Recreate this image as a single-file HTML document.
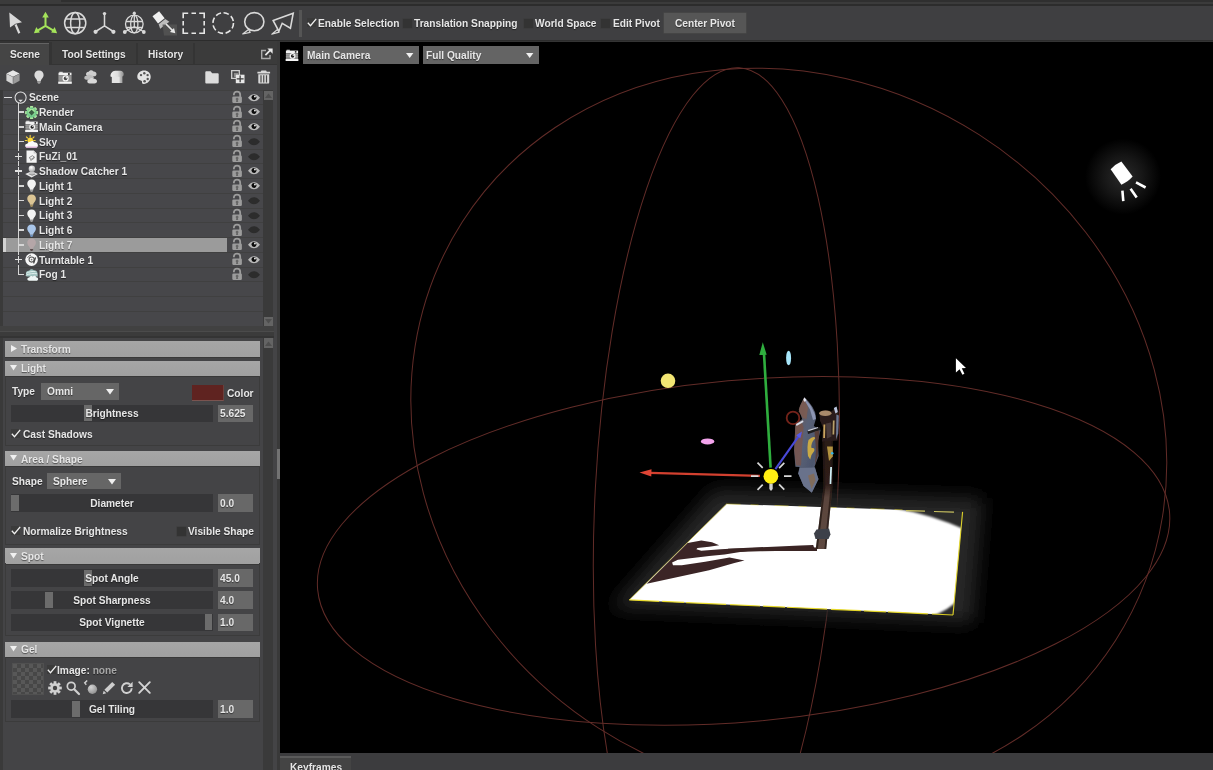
<!DOCTYPE html>
<html lang="en">
<head>
<meta charset="utf-8">
<title>Scene - Light 7</title>
<style>
*{box-sizing:border-box;margin:0;padding:0}
html,body{width:1213px;height:770px;overflow:hidden;background:#3d3d3d}
body{font-family:"Liberation Sans",sans-serif;font-size:11.5px;font-weight:700;color:#e6e6e6;line-height:14px;-webkit-font-smoothing:antialiased;text-shadow:0 1px 1px rgba(0,0,0,.5)}
#app{will-change:transform;filter:blur(0.400px);position:relative;width:1213px;height:770px;overflow:hidden;background:#3d3d3d}
.a{position:absolute}
.t{position:absolute;white-space:nowrap;transform:scaleX(.885);transform-origin:0 50%}
.tc{transform-origin:50% 50%}
svg{position:absolute;overflow:visible}
#topstrip{left:0;top:0;width:1213px;height:6px;background:#3b3b3b}
#toolbar{left:0;top:6px;width:1213px;height:34px;background:#3f3f41}
#tbline{left:0;top:39.600px;width:1213px;height:2.900px;background:#343434;border-top:1.200px solid #2c2c2c}
#left{left:0;top:42px;width:277.200px;height:728px;background:#444446}
#split{left:277.200px;top:40.800px;width:2.800px;height:729.200px;background:#393939}
#viewport{left:280px;top:42.400px;width:933px;height:710.600px;background:#000;overflow:hidden}
#bottom{left:280px;top:753px;width:933px;height:17px;background:#3c3c3e}
.cb{position:absolute;width:9px;height:9.200px;background:#333;box-shadow:0 0 0 0.500px #3a3a3a}
.dd{position:absolute;background:#666;height:17px}
.hdr{position:absolute;left:5.300px;width:254.300px;height:15.400px;background:linear-gradient(#a6a6a6,#a0a0a0);box-shadow:0 1px 0 #383838}
.grp{position:absolute;left:5px;width:255px;border:1px solid #3b3b3b;border-top:none}
.trk{position:absolute;left:11px;width:202px;height:17.700px;background:#363638}
.hnd{position:absolute;width:7.800px;height:16px;background:#6c6c6c;top:0.850px}
.val{position:absolute;left:217.800px;width:35.400px;height:17.700px;background:#686868}
</style>
</head>
<body>
<div id="app">
<div class="a" id="topstrip"><div class="a" style="left:61px;top:0;width:1152px;height:2px;background:#2f2f2f"></div><div class="a" style="left:0;top:4px;width:1213px;height:2px;background:#2c2c2c"></div></div>
<div class="a" id="toolbar">
<div class="a" style="left:299px;top:4px;width:3px;height:27px;background:#555"></div>
<div class="t" style="left:318px;top:10px">Enable Selection</div>
<div class="cb" style="left:403.300px;top:12.500px"></div>
<div class="t" style="left:414px;top:10px">Translation Snapping</div>
<div class="cb" style="left:523.700px;top:12.500px"></div>
<div class="t" style="left:535px;top:10px">World Space</div>
<div class="cb" style="left:601.300px;top:12.500px"></div>
<div class="t" style="left:612.500px;top:10px">Edit Pivot</div>
<div class="a" style="left:663.900px;top:7px;width:82.400px;height:20px;background:#565656;box-shadow:0 0 0 0.600px #4a4a4a"></div>
<div class="t" style="left:675px;top:10px">Center Pivot</div>
</div>
<div class="a" id="tbline"></div>
<div class="a" id="left">
<div class="a" id="tabs" style="left:0;top:-1.200px;width:277.200px;height:24.300px;background:#3b3b3b">
<div class="a" style="left:0;top:0;width:48.900px;height:1.800px;background:#333"></div>
<div class="a" style="left:0;top:1.800px;width:48.900px;height:22.500px;background:#454545;border-top:1.700px solid #636363"></div>
<div class="a" style="left:48.900px;top:1.500px;width:3px;height:22.800px;background:#343434"></div>
<div class="a" style="left:135.500px;top:2px;width:2.500px;height:21px;background:#343434"></div>
<div class="a" style="left:192.500px;top:2px;width:2.500px;height:21px;background:#343434"></div>
<div class="a" style="left:51.900px;top:23.300px;width:225.300px;height:1px;background:#343434"></div>
<div class="t" style="left:10px;top:5.700px">Scene</div>
<div class="t" style="left:62px;top:5.700px">Tool Settings</div>
<div class="t" style="left:148px;top:5.700px">History</div>
</div>
</div>
<div class="a" id="split"></div>
<div class="a" id="viewport">
<svg style="left:0;top:0" width="933" height="710.600" viewBox="280 42.400 933 710.600">
<defs><filter id="bl10" x="-30%" y="-60%" width="160%" height="220%"><feGaussianBlur stdDeviation="9"/></filter><filter id="bl1" x="-10%" y="-10%" width="120%" height="120%"><feGaussianBlur stdDeviation="1.100"/></filter><filter id="bl05"><feGaussianBlur stdDeviation="0.500"/></filter><filter id="bl03" x="-20%" y="-5%" width="140%" height="110%"><feGaussianBlur stdDeviation="0.350"/></filter><radialGradient id="spotg"><stop offset="0" stop-color="#2a2a2a"/><stop offset="0.500" stop-color="#171717"/><stop offset="1" stop-color="#000"/></radialGradient><linearGradient id="hndv" x1="0" x2="0" y1="0" y2="1"><stop offset="0" stop-color="#2a1b17"/><stop offset="0.400" stop-color="#2e1e1a"/><stop offset="0.520" stop-color="#5a443c"/><stop offset="1" stop-color="#5e4a42"/></linearGradient><linearGradient id="hnd" x1="0" x2="1" y1="0" y2="0"><stop offset="0" stop-color="#241816"/><stop offset="0.450" stop-color="#5e443c"/><stop offset="1" stop-color="#21150f"/></linearGradient><linearGradient id="bld" x1="0" x2="1" y1="0" y2="1"><stop offset="0" stop-color="#665049"/><stop offset="0.400" stop-color="#596176"/><stop offset="0.700" stop-color="#4c556c"/><stop offset="1" stop-color="#7a8298"/></linearGradient></defs>
<g><ellipse cx="788.800" cy="431.800" rx="387.900" ry="352.500" transform="rotate(-147.340 788.800 431.800)" fill="none" stroke="#622c28" stroke-width="1"/><ellipse cx="716.400" cy="494.700" rx="121.200" ry="427.200" transform="rotate(-176.970 716.400 494.700)" fill="none" stroke="#622c28" stroke-width="1"/><ellipse cx="743.600" cy="551.300" rx="170.800" ry="427.700" transform="rotate(84.810 743.600 551.300)" fill="none" stroke="#622c28" stroke-width="1"/></g>
<circle cx="1123" cy="177" r="38" fill="url(#spotg)"/>
<g transform="translate(1121.600 173.500) rotate(54.300)" fill="#fff"><path d="M-9.600 -6.600Q-11 0 -9.600 6.600L9.300 6.900Q11 0 9.300 -6.900Z"/></g>
<g stroke="#fff" stroke-width="2.600" stroke-linecap="butt"><path d="M1122.400 191.100L1123.300 201.500M1130.600 189.200L1136.700 197.800M1136 182.800L1145.600 187.900"/></g>
<polygon points="714.6,490.3 982.6,498.3 973.0,623.4 611.2,608.3" fill="#282828" filter="url(#bl10)"/>
<polygon points="726.6,504.3 962.6,512.3 953.0,615.4 629.2,600.3" fill="#2b2b2b"/>
<clipPath id="pl"><polygon points="726.6,504.3 962.6,512.3 953.0,615.4 629.2,600.3"/></clipPath>
<g clip-path="url(#pl)"><path filter="url(#bl1)" d="M600 640L600 480L740 480L894 508.300Q932 515 966 530.300L960 598Q949 611.500 929 617.500L700 640Z" fill="#fff"/></g>
<path d="M629.200 600.300L953 615.400" fill="none" stroke="#f0e020" stroke-width="1.200" stroke-dasharray="30 3 22 2 40 4" opacity="0.900"/>
<path d="M953 615.400L962.600 512.300" fill="none" stroke="#e6d92a" stroke-width="1.100" opacity="0.950"/>
<path d="M629.200 600.300L726.600 504.300" fill="none" stroke="#c9bd3a" stroke-width="0.900" opacity="0.800"/>
<path d="M726.600 504.300L905 510.200" fill="none" stroke="#f0e020" stroke-width="0.900" stroke-dasharray="14 10 8 16" opacity="0.450"/>
<path d="M906 511L962.600 512.800" fill="none" stroke="#c8c060" stroke-width="1.200" stroke-dasharray="19 9 20 12"/>
<polygon points="646.7,584.2 687.6,543.3 701.3,541.0 712.0,542.7 719.2,545.6 709.1,547.2 697.4,548.5 696.4,549.7 701.3,551.1 720.7,549.7 748.0,548.2 800.0,545.8 813.2,545.4 814.2,548.5 800.0,549.1 755.8,550.5 740.2,552.4 724.6,555.0 709.1,556.3 677.9,560.2 672.1,562.8 673.0,565.7 681.8,565.7 705.2,562.2 729.5,557.9 744.5,560.8 734.4,563.3 709.1,570.6 677.9,577.4" fill="#3b2526"/>
<path d="M728 550.900L760 549.900L790 549.300L817 549.600" stroke="#3a2423" stroke-width="3.600" fill="none"/>
<path d="M770.600 468L764 354" stroke="#2fae3e" stroke-width="2.600" fill="none"/><path d="M762.800 342.600L759.300 355.500L766.700 355.200Z" fill="#2fae3e"/>
<path d="M760 476.300L650 473.300" stroke="#d2402f" stroke-width="2.400" fill="none"/><path d="M639.500 473L651.500 469.600L651.300 476.800Z" fill="#e04535"/>
<circle cx="793" cy="418.300" r="6.300" fill="none" stroke="#74241a" stroke-width="1.800" filter="url(#bl05)"/>
<g filter="url(#bl03)">
<path d="M822.500 441L832.800 441L832.400 488L826.200 549.500L815.800 549.500L823.500 488Z" fill="url(#hndv)"/>
<path d="M822.500 441L824.500 441L825.300 488L817.800 549.500L815.800 549.500L823.500 488Z" fill="#1c1210" opacity="0.700"/>
<path d="M831 441L832.800 441L832.400 488L826.200 549.500L824.400 549.500L830.500 488Z" fill="#1c1210" opacity="0.650"/>
<path d="M819.500 413Q825 408.500 831.500 412L836 407.500L838.500 412L839.500 424L837.500 441L822 442L823 428L820 421Z" fill="#2c1f1b"/>
<ellipse cx="825.300" cy="413.700" rx="6.200" ry="2.800" fill="#a98a6c"/>
<path d="M823.500 425L825.300 425L825 438.500L823.200 438.500Z" fill="#c9a45e"/><path d="M832.900 421L834.600 421L834.200 435L832.500 435Z" fill="#b9a06a"/>
<path d="M833.800 408.500L836.600 407L837.800 412.500L835.500 414Z" fill="#b9c4dc"/><path d="M836.400 415L838.800 416L838.200 434L836 440Z" fill="#6d7894"/>
<path d="M826 424L831 423L831.500 437L827 439Z" fill="#4a3a3a"/>
<path d="M827 447L832.800 447L832.800 457L829 461.500Z" fill="#b1923f"/><circle cx="832.200" cy="453.600" r="1.300" fill="#35b6ea"/>
<path d="M830.200 467.500L832 467.500L831.300 484.500L829.600 484.500Z" fill="#cfeef6"/>
<path d="M816.500 530L829 529L830.500 535L828.500 539.500L815.500 539.500L814 534Z" fill="#3c4048"/>
<polygon points="804.3,397.7 808.5,402.0 812.5,407.3 815.2,413.0 815.9,419.5 813.8,426.3 817.0,428.5 820.6,430.4 817.9,441.3 818.6,456.3 814.5,467.2 817.9,478.1 818.6,479.5 811.8,493.2 803.6,486.4 798.2,474.0 799.5,467.3 795.4,467.2 794.1,450.9 795.4,425.0 802.2,419.5 798.8,410.0 800.9,404.5" fill="url(#bld)"/>
<path d="M804.300 397.800L799.600 407.500L798.800 412L803 418.500L806.500 419.500L808 408Z" fill="#7d5a50" opacity="0.850"/>
<path d="M804.300 397.800L811 406.500L815.300 415.500L815.900 419.500L813 420.500L810 410L805.500 402.500Z" fill="#8d96b4"/>
<path d="M804.300 397.800L806.500 400.500L804.800 402.500L803.300 400.500Z" fill="#e3e7f2"/>
<path d="M795.400 426.500L801.500 422L803.500 428L801 466L796 466L794.300 451Z" fill="#7e5446" opacity="0.700"/>
<path d="M796 424.500L803 420.700L803.500 422.500L796.500 426.500Z" fill="#d8dce6"/>
<path d="M807.500 431.500L820 427.500L820.500 430.500L808 434.500Z" fill="#1d1a1c"/><path d="M808 430.500L818 427.300L818.200 428.500L808.300 431.700Z" fill="#c8ccd6"/>
<path d="M808.500 440.500Q813.500 435.500 815.500 438.500Q810.500 443.500 811.500 448.500Q815.200 447.500 814.200 451.500Q811.200 454.500 810.200 460L808 456.500Q806.700 447 808.500 440.500Z" fill="#c9a944"/>
<path d="M814.500 432L819.500 431L818.500 441L817.800 456L815 465.500L816 450Z" fill="#5a3b32" opacity="0.900"/>
<path d="M799.800 468.500L815 468L818.300 479.500L811.800 493L803.600 486.400L798.300 474Z" fill="#69728b"/>
<path d="M808 476L814 474L815.500 481L811.500 489.500Z" fill="#8a6a48" opacity="0.700"/>
<path d="M800.500 434L775.400 469.500" stroke="#4a4ad8" stroke-width="2.100" fill="none"/><path d="M802 432L796.200 435.700L800.300 438.700Z" fill="#5759ea"/>
</g>
<g stroke="#d8d8d8" stroke-width="1.700"><path d="M751 476.500h7.500M784 476.500h7.500M757.500 463l5.200 5.200M784.300 463.300l-5.200 5.200M757.500 490.300l5.200 -5.200M784.300 490l-5.200 -5.200"/></g>
<path d="M769.300 484h3.400v5.500l-1.700 2l-1.700 -2z" fill="#cfcfcf"/>
<circle cx="770.900" cy="476.700" r="7.400" fill="#ffee12"/>
<circle cx="668" cy="381.200" r="7.300" fill="#f2e573"/>
<ellipse cx="707.600" cy="441.800" rx="6.700" ry="3" fill="#f3a4ec"/>
<ellipse cx="788.600" cy="358.400" rx="2.500" ry="7.300" fill="#a7e6fa"/>
<path d="M955.900 358.600L955.900 372.800L959.600 369.600L962.400 375.200L964.400 374.200L961.800 368.600L966 368.400Z" fill="#fff"/>
</svg>
<svg style="left:4.8px;top:6.2px" width="14" height="12.2" viewBox="0 0 14 13" ><rect x="0.500" y="1.700" width="13" height="2.700" fill="#f0f0f0"/><rect x="1.300" y="0.800" width="3.400" height="1.200" fill="#dedede"/><rect x="0.500" y="4.400" width="13" height="6.200" fill="#8c8c8c"/><path d="M0.500 6h13M0.500 8h13" stroke="#a8a8a8" stroke-width="0.700"/><circle cx="10.900" cy="3" r="0.950" fill="#1a1a1a"/><circle cx="7.600" cy="7.400" r="3.100" fill="#f4f4f4"/><circle cx="7.600" cy="7.400" r="1.800" fill="#222"/><circle cx="8.300" cy="6.700" r="0.700" fill="#fff"/><rect x="0.200" y="10.600" width="13.600" height="2.200" fill="#f4f4f4"/></svg>
<div class="dd" style="left:23.300px;top:3.200px;width:116px;height:18px;background:#646464"><span class="t" style="left:3.800px;top:2px">Main Camera</span></div>
<div class="dd" style="left:142.600px;top:3.200px;width:116.400px;height:18px;background:#646464"><span class="t" style="left:3.800px;top:2px">Full Quality</span></div>
<svg style="left:126px;top:10.300px" width="7.400" height="5.500" viewBox="0 0 8 6"><path d="M0 0h8l-4 5.500z" fill="#f0f0f0"/></svg>
<svg style="left:246px;top:10.300px" width="7.400" height="5.500" viewBox="0 0 8 6"><path d="M0 0h8l-4 5.500z" fill="#f0f0f0"/></svg>
</div>
<div class="a" id="bottom">
<div class="a" style="left:0;top:2.800px;width:71px;height:14.200px;background:#444;border-top:2px solid #5a5a5a"></div>
<div class="t" style="left:10px;top:6.500px">Keyframes</div>
</div>
<div class="a" id="scenepanel" style="left:0;top:0;width:280px;height:340px">
<div class="a" style="left:0;top:65px;width:277.200px;height:25px;background:#444446"></div>
<div class="a" id="tree" style="left:0;top:90.0px;width:263.200px;height:236.3px;background:#3a3a3a"></div>
<div class="a" style="left:3px;top:90.0px;width:259.700px;height:236.3px;background:#47474a"></div>
<div class="a" style="left:3px;top:89.50px;width:259.500px;height:1.200px;background:#404040"></div>
<div class="a" style="left:3px;top:104.25px;width:259.500px;height:1.200px;background:#404040"></div>
<div class="a" style="left:3px;top:119.00px;width:259.500px;height:1.200px;background:#404040"></div>
<div class="a" style="left:3px;top:133.75px;width:259.500px;height:1.200px;background:#404040"></div>
<div class="a" style="left:3px;top:148.50px;width:259.500px;height:1.200px;background:#404040"></div>
<div class="a" style="left:3px;top:163.25px;width:259.500px;height:1.200px;background:#404040"></div>
<div class="a" style="left:3px;top:178.00px;width:259.500px;height:1.200px;background:#404040"></div>
<div class="a" style="left:3px;top:192.75px;width:259.500px;height:1.200px;background:#404040"></div>
<div class="a" style="left:3px;top:207.50px;width:259.500px;height:1.200px;background:#404040"></div>
<div class="a" style="left:3px;top:222.25px;width:259.500px;height:1.200px;background:#404040"></div>
<div class="a" style="left:3px;top:237.00px;width:259.500px;height:1.200px;background:#404040"></div>
<div class="a" style="left:3px;top:251.75px;width:259.500px;height:1.200px;background:#404040"></div>
<div class="a" style="left:3px;top:266.50px;width:259.500px;height:1.200px;background:#404040"></div>
<div class="a" style="left:3px;top:281.25px;width:259.500px;height:1.200px;background:#404040"></div>
<div class="a" style="left:3px;top:296.00px;width:259.500px;height:1.200px;background:#404040"></div>
<div class="a" style="left:3px;top:310.75px;width:259.500px;height:1.200px;background:#404040"></div>
<div class="a" style="left:17.700px;top:103.2px;width:1.600px;height:171.8px;background:#d6d6d6"></div>
<div class="a" style="left:4px;top:96.6px;width:7.500px;height:1.600px;background:#dcdcdc"></div>
<svg style="left:13.8px;top:90.8px" width="13.2" height="13.2" viewBox="0 0 14 14" ><circle cx="7" cy="7" r="5.9" fill="none" stroke="#e4e4e4" stroke-width="1.1"/><path d="M4.6 9.2h4.8l-2.4 2.6z" fill="#e4e4e4"/></svg>
<div class="t" style="left:28.5px;top:90.3px">Scene</div>
<svg style="left:232px;top:90.9px" width="10.2" height="12" viewBox="0 0 10.2 12" ><path d="M1.900 4.200v-0.600c0 -1.900 1.300 -3 3.100 -3 1.900 0 3.200 1.200 3.200 3.100v2.400" fill="none" stroke="#9c9c9c" stroke-width="1.800"/><rect x="0.300" y="5.600" width="9.600" height="6.300" rx="1.200" fill="#9c9c9c"/><path d="M5.100 6.800c0.800 0 1.400 0.600 1.400 1.300 0 0.500 -0.300 0.900 -0.600 1.100l0.300 1.900h-2.200l0.300 -1.900c-0.300 -0.200 -0.600 -0.600 -0.600 -1.100 0 -0.700 0.600 -1.300 1.400 -1.300z" fill="#666"/></svg>
<svg style="left:247.8px;top:93.5px" width="12" height="7.6" viewBox="0 0 12 7.6" ><path d="M0 3.700c2 -2.400 3.800 -3.500 6 -3.500s4 1.100 6 3.500c-2 2.400 -3.800 3.500 -6 3.500s-4 -1.100 -6 -3.500z" fill="#b9b9b9"/><circle cx="6" cy="3.500" r="2.500" fill="#0c0c0c"/><circle cx="6.900" cy="2.500" r="0.950" fill="#e4e4e4"/></svg>
<div class="a" style="left:19px;top:111.47px;width:5px;height:1.300px;background:#d6d6d6"></div>
<svg style="left:25.1px;top:105.5px" width="13.2" height="13.2" viewBox="0 0 14 14" ><defs><linearGradient id="gg1" x1="0" y1="0" x2="0" y2="1"><stop offset="0" stop-color="#bdf2a4"/><stop offset="1" stop-color="#62bf84"/></linearGradient></defs><g fill="url(#gg1)"><circle cx="7" cy="7" r="5.300"/><rect x="5.300" y="0.100" width="3.400" height="3" rx="0.600" transform="rotate(0 7 7)"/><rect x="5.300" y="0.100" width="3.400" height="3" rx="0.600" transform="rotate(45 7 7)"/><rect x="5.300" y="0.100" width="3.400" height="3" rx="0.600" transform="rotate(90 7 7)"/><rect x="5.300" y="0.100" width="3.400" height="3" rx="0.600" transform="rotate(135 7 7)"/><rect x="5.300" y="0.100" width="3.400" height="3" rx="0.600" transform="rotate(180 7 7)"/><rect x="5.300" y="0.100" width="3.400" height="3" rx="0.600" transform="rotate(225 7 7)"/><rect x="5.300" y="0.100" width="3.400" height="3" rx="0.600" transform="rotate(270 7 7)"/><rect x="5.300" y="0.100" width="3.400" height="3" rx="0.600" transform="rotate(315 7 7)"/></g><path d="M7 3.900L10.100 7 7 10.100 3.900 7z" fill="#3a5c42"/></svg>
<div class="t" style="left:39.4px;top:105.0px">Render</div>
<svg style="left:232px;top:105.6px" width="10.2" height="12" viewBox="0 0 10.2 12" ><path d="M1.900 4.200v-0.600c0 -1.900 1.300 -3 3.100 -3 1.900 0 3.200 1.200 3.200 3.100v2.400" fill="none" stroke="#9c9c9c" stroke-width="1.800"/><rect x="0.300" y="5.600" width="9.600" height="6.300" rx="1.200" fill="#9c9c9c"/><path d="M5.100 6.800c0.800 0 1.400 0.600 1.400 1.300 0 0.500 -0.300 0.900 -0.600 1.100l0.300 1.900h-2.200l0.300 -1.900c-0.300 -0.200 -0.600 -0.600 -0.600 -1.100 0 -0.700 0.600 -1.300 1.400 -1.300z" fill="#666"/></svg>
<svg style="left:247.8px;top:108.2px" width="12" height="7.6" viewBox="0 0 12 7.6" ><path d="M0 3.700c2 -2.400 3.800 -3.500 6 -3.500s4 1.100 6 3.500c-2 2.400 -3.800 3.500 -6 3.500s-4 -1.100 -6 -3.500z" fill="#b9b9b9"/><circle cx="6" cy="3.500" r="2.500" fill="#0c0c0c"/><circle cx="6.900" cy="2.500" r="0.950" fill="#e4e4e4"/></svg>
<div class="a" style="left:19px;top:126.22px;width:5px;height:1.300px;background:#d6d6d6"></div>
<svg style="left:25.1px;top:120.3px" width="13.2" height="13.2" viewBox="0 0 14 14" ><rect x="0.500" y="1.700" width="13" height="2.700" fill="#f0f0f0"/><rect x="1.300" y="0.800" width="3.400" height="1.200" fill="#dedede"/><rect x="0.500" y="4.400" width="13" height="6.200" fill="#8c8c8c"/><path d="M0.500 6h13M0.500 8h13" stroke="#a8a8a8" stroke-width="0.700"/><circle cx="10.900" cy="3" r="0.950" fill="#1a1a1a"/><circle cx="7.600" cy="7.400" r="3.100" fill="#f4f4f4"/><circle cx="7.600" cy="7.400" r="1.800" fill="#222"/><circle cx="8.300" cy="6.700" r="0.700" fill="#fff"/><rect x="0.200" y="10.600" width="13.600" height="2.200" fill="#f4f4f4"/></svg>
<div class="t" style="left:39.4px;top:119.8px">Main Camera</div>
<svg style="left:232px;top:120.4px" width="10.2" height="12" viewBox="0 0 10.2 12" ><path d="M1.900 4.200v-0.600c0 -1.900 1.300 -3 3.100 -3 1.900 0 3.200 1.200 3.200 3.100v2.400" fill="none" stroke="#9c9c9c" stroke-width="1.800"/><rect x="0.300" y="5.600" width="9.600" height="6.300" rx="1.200" fill="#9c9c9c"/><path d="M5.100 6.800c0.800 0 1.400 0.600 1.400 1.300 0 0.500 -0.300 0.900 -0.600 1.100l0.300 1.900h-2.200l0.300 -1.900c-0.300 -0.200 -0.600 -0.600 -0.600 -1.100 0 -0.700 0.600 -1.300 1.400 -1.300z" fill="#666"/></svg>
<svg style="left:247.8px;top:123.0px" width="12" height="7.6" viewBox="0 0 12 7.6" ><path d="M0 3.700c2 -2.400 3.800 -3.500 6 -3.500s4 1.100 6 3.500c-2 2.400 -3.800 3.500 -6 3.500s-4 -1.100 -6 -3.500z" fill="#b9b9b9"/><circle cx="6" cy="3.500" r="2.500" fill="#0c0c0c"/><circle cx="6.900" cy="2.500" r="0.950" fill="#e4e4e4"/></svg>
<div class="a" style="left:19px;top:140.97px;width:5px;height:1.300px;background:#d6d6d6"></div>
<svg style="left:25.1px;top:135.0px" width="13.2" height="13.2" viewBox="0 0 14 14" ><g stroke="#f4d23c" stroke-width="1.2" stroke-linecap="round"><path d="M5.5 0.4v1.6M1.5 2l1.2 1.2M9.6 2L8.4 3.2M0.3 5.8h1.6M10.8 5.8H9.2"/></g><circle cx="5.6" cy="5.6" r="2.9" fill="#ffd93a"/><path d="M2.6 13.4c-1.6 0-2.4-0.9-2.4-2 0-1.3 1.1-2.1 2.3-2 0.4-1.5 1.8-2.4 3.3-2.2 0.9-1.1 3-1.2 4 0.4 2-0.2 3.9 1.2 3.9 3.2 0 1.500-1 2.600-2.600 2.600z" fill="#fafafa"/><path d="M0.4 12.1c0.400 0.900 1.100 1.500 2.200 1.500h8.500c1.200 0 2-0.600 2.400-1.500z" fill="#e6b8e0"/></svg>
<div class="t" style="left:39.4px;top:134.6px">Sky</div>
<svg style="left:232px;top:135.1px" width="10.2" height="12" viewBox="0 0 10.2 12" ><path d="M1.900 4.200v-0.600c0 -1.900 1.300 -3 3.100 -3 1.900 0 3.200 1.200 3.200 3.100v2.400" fill="none" stroke="#9c9c9c" stroke-width="1.800"/><rect x="0.300" y="5.600" width="9.600" height="6.300" rx="1.200" fill="#9c9c9c"/><path d="M5.100 6.800c0.800 0 1.400 0.600 1.400 1.300 0 0.500 -0.300 0.900 -0.600 1.100l0.300 1.900h-2.200l0.300 -1.900c-0.300 -0.200 -0.600 -0.600 -0.600 -1.100 0 -0.700 0.600 -1.300 1.400 -1.300z" fill="#666"/></svg>
<svg style="left:247.8px;top:137.7px" width="12" height="7.6" viewBox="0 0 12 7.6" ><path d="M0 3.700c2 -2.400 3.800 -3.500 6 -3.500s4 1.100 6 3.500c-2 2.400 -3.800 3.500 -6 3.500s-4 -1.100 -6 -3.500z" fill="#2c2c2c"/></svg>
<div class="a" style="left:14.200px;top:151.4px;width:8.600px;height:10px;background:#47474a"></div>
<div class="a" style="left:14.600px;top:155.6px;width:7.800px;height:1.600px;background:#e0e0e0"></div>
<div class="a" style="left:17.700px;top:152.5px;width:1.600px;height:7.800px;background:#e0e0e0"></div>
<svg style="left:25.1px;top:149.8px" width="13.2" height="13.2" viewBox="0 0 14 14" ><path d="M1.6 0.4h7.6l3.200 3.200v10h-10.800z" fill="#f4f4f4"/><path d="M9.2 0.4v3.200h3.200z" fill="#c8c8c8"/><g fill="none" stroke="#8a8a8a" stroke-width="1"><path d="M4.300 8.200l3.600-2.200 2.100 1.600-3.500 2.300z"/><path d="M5.800 9.900l0.300 1.200 3.400-2.200 0.500-1.300"/></g></svg>
<div class="t" style="left:39.4px;top:149.3px">FuZi_01</div>
<svg style="left:232px;top:149.9px" width="10.2" height="12" viewBox="0 0 10.2 12" ><path d="M1.900 4.200v-0.600c0 -1.900 1.300 -3 3.100 -3 1.900 0 3.200 1.200 3.200 3.100v2.400" fill="none" stroke="#9c9c9c" stroke-width="1.800"/><rect x="0.300" y="5.600" width="9.600" height="6.300" rx="1.200" fill="#9c9c9c"/><path d="M5.100 6.800c0.800 0 1.400 0.600 1.400 1.300 0 0.500 -0.300 0.900 -0.600 1.100l0.300 1.900h-2.200l0.300 -1.900c-0.300 -0.200 -0.600 -0.600 -0.600 -1.100 0 -0.700 0.600 -1.300 1.400 -1.300z" fill="#666"/></svg>
<svg style="left:247.8px;top:152.5px" width="12" height="7.6" viewBox="0 0 12 7.6" ><path d="M0 3.700c2 -2.400 3.800 -3.500 6 -3.500s4 1.100 6 3.500c-2 2.400 -3.800 3.500 -6 3.500s-4 -1.100 -6 -3.500z" fill="#2c2c2c"/></svg>
<div class="a" style="left:14.200px;top:166.1px;width:8.600px;height:10px;background:#47474a"></div>
<div class="a" style="left:14.600px;top:170.3px;width:7.800px;height:1.600px;background:#e0e0e0"></div>
<div class="a" style="left:17.700px;top:167.2px;width:1.600px;height:7.800px;background:#e0e0e0"></div>
<svg style="left:25.1px;top:164.5px" width="13.2" height="13.2" viewBox="0 0 14 14" ><defs><radialGradient id="cg5" cx="0.4" cy="0.3" r="0.8"><stop offset="0" stop-color="#fff"/><stop offset="1" stop-color="#9a9a9a"/></radialGradient></defs><path d="M0.200 9.600l6.800-3 6.800 3-6.800 3.800z" fill="#e9e9e9"/><path d="M3.500 9.500l4.500-1.600 3.500 1.800-4 1.800z" fill="#8a8a8a"/><path d="M4.400 9.400c0-1.700 0.900-2.400 1.600-2.800h2.800c0.900 0.500 1.500 1.400 1.500 2.800-1.500 1-4.400 1-5.900 0z" fill="#c4c4c4"/><circle cx="7.300" cy="4" r="3.400" fill="url(#cg5)"/></svg>
<div class="t" style="left:39.4px;top:164.1px">Shadow Catcher 1</div>
<svg style="left:232px;top:164.6px" width="10.2" height="12" viewBox="0 0 10.2 12" ><path d="M1.900 4.200v-0.600c0 -1.900 1.300 -3 3.100 -3 1.900 0 3.200 1.200 3.200 3.100v2.400" fill="none" stroke="#9c9c9c" stroke-width="1.800"/><rect x="0.300" y="5.600" width="9.600" height="6.300" rx="1.200" fill="#9c9c9c"/><path d="M5.100 6.800c0.800 0 1.400 0.600 1.400 1.300 0 0.500 -0.300 0.900 -0.600 1.100l0.300 1.900h-2.200l0.300 -1.900c-0.300 -0.200 -0.600 -0.600 -0.600 -1.100 0 -0.700 0.600 -1.300 1.400 -1.300z" fill="#666"/></svg>
<svg style="left:247.8px;top:167.2px" width="12" height="7.6" viewBox="0 0 12 7.6" ><path d="M0 3.700c2 -2.400 3.800 -3.500 6 -3.500s4 1.100 6 3.500c-2 2.400 -3.800 3.500 -6 3.500s-4 -1.100 -6 -3.500z" fill="#b9b9b9"/><circle cx="6" cy="3.500" r="2.500" fill="#0c0c0c"/><circle cx="6.900" cy="2.500" r="0.950" fill="#e4e4e4"/></svg>
<div class="a" style="left:19px;top:185.22px;width:5px;height:1.300px;background:#d6d6d6"></div>
<svg style="left:25.1px;top:179.3px" width="13.2" height="13.2" viewBox="0 0 14 14" ><path d="M7 0.6c-2.9 0-4.6 2-4.6 4.4 0 1.7 1 2.9 1.9 4.1 0.6 0.8 0.9 1.5 1 2.4h3.4c0.1-0.9 0.4-1.6 1-2.4 0.9-1.2 1.9-2.4 1.9-4.1 0-2.4-1.7-4.4-4.6-4.4z" fill="#f3f3f3"/><path d="M5.4 11.7h3.2v1.1l-1 1h-1.2l-1-1z" fill="#9b9b9b"/></svg>
<div class="t" style="left:39.4px;top:178.8px">Light 1</div>
<svg style="left:232px;top:179.4px" width="10.2" height="12" viewBox="0 0 10.2 12" ><path d="M1.900 4.200v-0.600c0 -1.900 1.300 -3 3.100 -3 1.900 0 3.200 1.200 3.200 3.100v2.400" fill="none" stroke="#9c9c9c" stroke-width="1.800"/><rect x="0.300" y="5.600" width="9.600" height="6.300" rx="1.200" fill="#9c9c9c"/><path d="M5.100 6.800c0.800 0 1.400 0.600 1.400 1.300 0 0.500 -0.300 0.900 -0.600 1.100l0.300 1.900h-2.200l0.300 -1.900c-0.300 -0.200 -0.600 -0.600 -0.600 -1.100 0 -0.700 0.600 -1.300 1.400 -1.300z" fill="#666"/></svg>
<svg style="left:247.8px;top:182.0px" width="12" height="7.6" viewBox="0 0 12 7.6" ><path d="M0 3.700c2 -2.400 3.800 -3.500 6 -3.500s4 1.100 6 3.500c-2 2.400 -3.800 3.500 -6 3.500s-4 -1.100 -6 -3.500z" fill="#b9b9b9"/><circle cx="6" cy="3.500" r="2.500" fill="#0c0c0c"/><circle cx="6.900" cy="2.500" r="0.950" fill="#e4e4e4"/></svg>
<div class="a" style="left:19px;top:199.97px;width:5px;height:1.300px;background:#d6d6d6"></div>
<svg style="left:25.1px;top:194.0px" width="13.2" height="13.2" viewBox="0 0 14 14" ><path d="M7 0.6c-2.9 0-4.6 2-4.6 4.4 0 1.7 1 2.9 1.9 4.1 0.6 0.8 0.9 1.5 1 2.4h3.4c0.1-0.9 0.4-1.6 1-2.4 0.9-1.2 1.9-2.4 1.9-4.1 0-2.4-1.7-4.4-4.6-4.4z" fill="#dcc594"/><path d="M5.4 11.7h3.2v1.1l-1 1h-1.2l-1-1z" fill="#a08c5e"/></svg>
<div class="t" style="left:39.4px;top:193.6px">Light 2</div>
<svg style="left:232px;top:194.1px" width="10.2" height="12" viewBox="0 0 10.2 12" ><path d="M1.900 4.200v-0.600c0 -1.900 1.300 -3 3.100 -3 1.900 0 3.200 1.200 3.200 3.100v2.400" fill="none" stroke="#9c9c9c" stroke-width="1.800"/><rect x="0.300" y="5.600" width="9.600" height="6.300" rx="1.200" fill="#9c9c9c"/><path d="M5.100 6.800c0.800 0 1.400 0.600 1.400 1.300 0 0.500 -0.300 0.900 -0.600 1.100l0.300 1.900h-2.200l0.300 -1.900c-0.300 -0.200 -0.600 -0.600 -0.600 -1.100 0 -0.700 0.600 -1.300 1.400 -1.300z" fill="#666"/></svg>
<svg style="left:247.8px;top:196.7px" width="12" height="7.6" viewBox="0 0 12 7.6" ><path d="M0 3.700c2 -2.400 3.800 -3.500 6 -3.500s4 1.100 6 3.500c-2 2.400 -3.800 3.500 -6 3.500s-4 -1.100 -6 -3.500z" fill="#2c2c2c"/></svg>
<div class="a" style="left:19px;top:214.72px;width:5px;height:1.300px;background:#d6d6d6"></div>
<svg style="left:25.1px;top:208.8px" width="13.2" height="13.2" viewBox="0 0 14 14" ><path d="M7 0.6c-2.9 0-4.6 2-4.6 4.4 0 1.7 1 2.9 1.9 4.1 0.6 0.8 0.9 1.5 1 2.4h3.4c0.1-0.9 0.4-1.6 1-2.4 0.9-1.2 1.9-2.4 1.9-4.1 0-2.4-1.7-4.4-4.6-4.4z" fill="#f3f3f3"/><path d="M5.4 11.7h3.2v1.1l-1 1h-1.2l-1-1z" fill="#9b9b9b"/></svg>
<div class="t" style="left:39.4px;top:208.3px">Light 3</div>
<svg style="left:232px;top:208.9px" width="10.2" height="12" viewBox="0 0 10.2 12" ><path d="M1.900 4.200v-0.600c0 -1.900 1.300 -3 3.100 -3 1.900 0 3.200 1.200 3.200 3.100v2.400" fill="none" stroke="#9c9c9c" stroke-width="1.800"/><rect x="0.300" y="5.600" width="9.600" height="6.300" rx="1.200" fill="#9c9c9c"/><path d="M5.100 6.800c0.800 0 1.400 0.600 1.400 1.300 0 0.500 -0.300 0.900 -0.600 1.100l0.300 1.900h-2.200l0.300 -1.900c-0.300 -0.200 -0.600 -0.600 -0.600 -1.100 0 -0.700 0.600 -1.300 1.400 -1.300z" fill="#666"/></svg>
<svg style="left:247.8px;top:211.5px" width="12" height="7.6" viewBox="0 0 12 7.6" ><path d="M0 3.700c2 -2.400 3.800 -3.500 6 -3.500s4 1.100 6 3.500c-2 2.400 -3.800 3.500 -6 3.500s-4 -1.100 -6 -3.500z" fill="#2c2c2c"/></svg>
<div class="a" style="left:19px;top:229.47px;width:5px;height:1.300px;background:#d6d6d6"></div>
<svg style="left:25.1px;top:223.5px" width="13.2" height="13.2" viewBox="0 0 14 14" ><path d="M7 0.6c-2.9 0-4.6 2-4.6 4.4 0 1.7 1 2.9 1.9 4.1 0.6 0.8 0.9 1.5 1 2.4h3.4c0.1-0.9 0.4-1.6 1-2.4 0.9-1.2 1.9-2.4 1.9-4.1 0-2.4-1.7-4.4-4.6-4.4z" fill="#a9c6ea"/><path d="M5.4 11.7h3.2v1.1l-1 1h-1.2l-1-1z" fill="#6c8fba"/></svg>
<div class="t" style="left:39.4px;top:223.1px">Light 6</div>
<svg style="left:232px;top:223.6px" width="10.2" height="12" viewBox="0 0 10.2 12" ><path d="M1.900 4.200v-0.600c0 -1.900 1.300 -3 3.100 -3 1.900 0 3.200 1.200 3.200 3.100v2.400" fill="none" stroke="#9c9c9c" stroke-width="1.800"/><rect x="0.300" y="5.600" width="9.600" height="6.300" rx="1.200" fill="#9c9c9c"/><path d="M5.100 6.800c0.800 0 1.400 0.600 1.400 1.300 0 0.500 -0.300 0.900 -0.600 1.100l0.300 1.900h-2.200l0.300 -1.900c-0.300 -0.200 -0.600 -0.600 -0.600 -1.100 0 -0.700 0.600 -1.300 1.400 -1.300z" fill="#666"/></svg>
<svg style="left:247.8px;top:226.2px" width="12" height="7.6" viewBox="0 0 12 7.6" ><path d="M0 3.700c2 -2.400 3.800 -3.500 6 -3.500s4 1.100 6 3.500c-2 2.400 -3.800 3.500 -6 3.500s-4 -1.100 -6 -3.500z" fill="#2c2c2c"/></svg>
<div class="a" style="left:3px;top:237.8px;width:223.500px;height:14.4px;background:#9b9b9b"></div>
<div class="a" style="left:3px;top:237.8px;width:2.600px;height:14.4px;background:#d2d2d2"></div>
<div class="a" style="left:17.700px;top:237.5px;width:1.600px;height:15.8px;background:#d6d6d6"></div>
<div class="a" style="left:19px;top:244.22px;width:5px;height:1.300px;background:#d6d6d6"></div>
<svg style="left:25.1px;top:238.3px" width="13.2" height="13.2" viewBox="0 0 14 14" ><path d="M7 0.6c-2.9 0-4.6 2-4.6 4.4 0 1.7 1 2.9 1.9 4.1 0.6 0.8 0.9 1.5 1 2.4h3.4c0.1-0.9 0.4-1.6 1-2.4 0.9-1.2 1.9-2.4 1.9-4.1 0-2.4-1.7-4.4-4.6-4.4z" fill="#b5a6a8"/><path d="M5.4 11.7h3.2v1.1l-1 1h-1.2l-1-1z" fill="#5a4a4c"/></svg>
<div class="t" style="left:39.4px;top:237.8px">Light 7</div>
<svg style="left:232px;top:238.4px" width="10.2" height="12" viewBox="0 0 10.2 12" ><path d="M1.900 4.200v-0.600c0 -1.900 1.300 -3 3.100 -3 1.900 0 3.200 1.200 3.200 3.100v2.400" fill="none" stroke="#9c9c9c" stroke-width="1.800"/><rect x="0.300" y="5.600" width="9.600" height="6.300" rx="1.200" fill="#9c9c9c"/><path d="M5.100 6.800c0.800 0 1.400 0.600 1.400 1.300 0 0.500 -0.300 0.900 -0.600 1.100l0.300 1.900h-2.200l0.300 -1.900c-0.300 -0.200 -0.600 -0.600 -0.600 -1.100 0 -0.700 0.600 -1.300 1.400 -1.300z" fill="#666"/></svg>
<svg style="left:247.8px;top:241.0px" width="12" height="7.6" viewBox="0 0 12 7.6" ><path d="M0 3.700c2 -2.400 3.800 -3.500 6 -3.500s4 1.100 6 3.500c-2 2.400 -3.800 3.500 -6 3.500s-4 -1.100 -6 -3.500z" fill="#b9b9b9"/><circle cx="6" cy="3.500" r="2.500" fill="#0c0c0c"/><circle cx="6.900" cy="2.500" r="0.950" fill="#e4e4e4"/></svg>
<div class="a" style="left:14.200px;top:254.6px;width:8.600px;height:10px;background:#47474a"></div>
<div class="a" style="left:14.600px;top:258.8px;width:7.800px;height:1.600px;background:#e0e0e0"></div>
<div class="a" style="left:17.700px;top:255.7px;width:1.600px;height:7.800px;background:#e0e0e0"></div>
<svg style="left:25.1px;top:253.0px" width="13.2" height="13.2" viewBox="0 0 14 14" ><circle cx="7" cy="7" r="6.700" fill="#f6f6f6"/><circle cx="7" cy="7" r="2.700" fill="none" stroke="#555" stroke-width="1.100"/><circle cx="7" cy="7" r="0.900" fill="#777"/><path d="M2.800 5.200c0.700-1.600 2-2.600 3.600-2.900" fill="none" stroke="#666" stroke-width="1"/><path d="M10.900 5.300l-1.600 5.200" fill="none" stroke="#444" stroke-width="1.500" stroke-linecap="round"/></svg>
<div class="t" style="left:39.4px;top:252.6px">Turntable 1</div>
<svg style="left:232px;top:253.1px" width="10.2" height="12" viewBox="0 0 10.2 12" ><path d="M1.900 4.200v-0.600c0 -1.900 1.300 -3 3.100 -3 1.900 0 3.200 1.200 3.200 3.100v2.400" fill="none" stroke="#9c9c9c" stroke-width="1.800"/><rect x="0.300" y="5.600" width="9.600" height="6.300" rx="1.200" fill="#9c9c9c"/><path d="M5.100 6.800c0.800 0 1.400 0.600 1.400 1.300 0 0.500 -0.300 0.900 -0.600 1.100l0.300 1.900h-2.200l0.300 -1.900c-0.300 -0.200 -0.600 -0.600 -0.600 -1.100 0 -0.700 0.600 -1.300 1.400 -1.300z" fill="#666"/></svg>
<svg style="left:247.8px;top:255.7px" width="12" height="7.6" viewBox="0 0 12 7.6" ><path d="M0 3.700c2 -2.400 3.800 -3.500 6 -3.500s4 1.100 6 3.500c-2 2.400 -3.800 3.500 -6 3.500s-4 -1.100 -6 -3.500z" fill="#b9b9b9"/><circle cx="6" cy="3.500" r="2.500" fill="#0c0c0c"/><circle cx="6.900" cy="2.500" r="0.950" fill="#e4e4e4"/></svg>
<div class="a" style="left:19px;top:273.73px;width:5px;height:1.300px;background:#d6d6d6"></div>
<svg style="left:25.1px;top:267.8px" width="13.2" height="13.2" viewBox="0 0 14 14" ><path d="M1 6.200c-0.200-2.400 1.800-3.600 3.400-3.200 0.700-1.800 3.400-2.600 5-0.600 2-0.300 3.600 1 3.800 2.800l0.400 3.800h-12z" fill="#9fc3c0"/><path d="M1.400 5.600c2.800-1.600 6.500-2.300 9.800-1.700M0.800 7.800c3.500-1.800 8.500-2.400 12.200-1.600" stroke="#e4f2f0" stroke-width="1" fill="none"/><path d="M4.600 13.600c-1.300 0-2.100-0.800-2.100-1.800 0-1.100 0.900-1.900 2-1.800 0.400-1.500 2.400-2.200 3.800-1.100 1.100-1 3.100-0.600 3.600 0.900 1.200 0 2 0.800 2 1.900s-0.800 1.900-2 1.900z" fill="#eef6f5"/></svg>
<div class="t" style="left:39.4px;top:267.3px">Fog 1</div>
<svg style="left:232px;top:267.9px" width="10.2" height="12" viewBox="0 0 10.2 12" ><path d="M1.900 4.200v-0.600c0 -1.900 1.300 -3 3.100 -3 1.900 0 3.200 1.200 3.200 3.100v2.400" fill="none" stroke="#9c9c9c" stroke-width="1.800"/><rect x="0.300" y="5.600" width="9.600" height="6.300" rx="1.200" fill="#9c9c9c"/><path d="M5.100 6.800c0.800 0 1.400 0.600 1.400 1.300 0 0.500 -0.300 0.900 -0.600 1.100l0.300 1.900h-2.200l0.300 -1.900c-0.300 -0.200 -0.600 -0.600 -0.600 -1.100 0 -0.700 0.600 -1.300 1.400 -1.300z" fill="#666"/></svg>
<svg style="left:247.8px;top:270.5px" width="12" height="7.6" viewBox="0 0 12 7.6" ><path d="M0 3.700c2 -2.400 3.800 -3.500 6 -3.500s4 1.100 6 3.500c-2 2.400 -3.800 3.500 -6 3.500s-4 -1.100 -6 -3.500z" fill="#2c2c2c"/></svg>
<div class="a" style="left:263.200px;top:90.0px;width:10.300px;height:236.3px;background:#3a3a3a"></div>
<div class="a" style="left:263.900px;top:90.8px;width:9.100px;height:9.300px;background:#646464"></div>
<div class="a" style="left:263.900px;top:316.700px;width:9.100px;height:9.500px;background:#646464"></div>
<svg style="left:265px;top:93px" width="7" height="5" viewBox="0 0 7 5"><path d="M0 5L3.500 0.500 7 5z" fill="#4e4e4e"/></svg>
<svg style="left:265px;top:319px" width="7" height="5" viewBox="0 0 7 5"><path d="M0 0L3.500 4.500 7 0z" fill="#4e4e4e"/></svg>
</div>
<div class="a" id="props" style="left:0;top:0;width:280px;height:770px">
<div class="a" style="left:0;top:326.300px;width:273.500px;height:11.500px;background:#414141"></div>
<div class="a" style="left:0;top:330.800px;width:273.500px;height:1.200px;background:#4b4b4b"></div>
<div class="a" style="left:0;top:332px;width:273.500px;height:4px;background:#3b3b3b"></div>
<div class="a" style="left:0;top:336px;width:273.500px;height:1.600px;background:#343434"></div>
<div class="a" style="left:0;top:337.600px;width:263.200px;height:432.400px;background:#444446"></div>
<div class="a" style="left:0;top:337.600px;width:2.600px;height:432.400px;background:#3a3a3a"></div>
<div class="a" style="left:263.200px;top:337.600px;width:10.300px;height:432.400px;background:#3a3a3a"></div>
<div class="a" style="left:263.900px;top:338.200px;width:9.100px;height:9.600px;background:#646464"></div>
<svg style="left:265px;top:340.800px" width="7" height="5" viewBox="0 0 7 5"><path d="M0 5L3.500 0.500 7 5z" fill="#4e4e4e"/></svg>
<div class="a" style="left:277.300px;top:449.400px;width:2.700px;height:29.800px;background:#727272"></div>
<div class="hdr" style="top:341.3px"></div>
<svg style="left:10.500px;top:345.0px" width="6" height="7" viewBox="0 0 6 7"><path d="M0 0l6 3.500-6 3.500z" fill="#f0f0f0"/></svg>
<div class="t" style="left:20.500px;top:341.8px">Transform</div>
<div class="hdr" style="top:360.8px"></div>
<svg style="left:9.500px;top:365.1px" width="7" height="6" viewBox="0 0 7 6"><path d="M0 0h7l-3.500 5.500z" fill="#f0f0f0"/></svg>
<div class="t" style="left:20.500px;top:361.3px">Light</div>
<div class="grp" style="top:375.8px;height:70.2px"></div>
<div class="t" style="left:11.500px;top:384px">Type</div>
<div class="dd" style="left:41px;top:383px;width:78px;height:16.500px"><span class="t" style="left:5.500px;top:1px">Omni</span></div>
<svg style="left:105.5px;top:389.0px" width="8" height="6" viewBox="0 0 8 6"><path d="M0 0h8l-4 5.500z" fill="#f0f0f0"/></svg>
<div class="a" style="left:191.500px;top:384.500px;width:32px;height:16px;background:#5f2320;border-bottom:1px solid #7a5450;border-right:1px solid #6a403c"></div>
<div class="t" style="left:226.500px;top:385.500px">Color</div>
<div class="trk" style="top:404.5px"><div class="hnd" style="left:73.2px"></div></div>
<div class="t tc" style="left:11px;width:202px;text-align:center;top:406.0px">Brightness</div>
<div class="val" style="top:404.5px"></div><div class="t" style="left:220px;top:406.0px">5.625</div>
<div class="cb" style="left:11.2px;top:428.8px;background:#3b3b3b;box-shadow:none"></div>
<svg style="left:11px;top:428.5px" width="10" height="9" viewBox="0 0 10 9"><path d="M0.800 4.800l2.700 2.900 5.700-6.900" fill="none" stroke="#f0f0f0" stroke-width="1.300"/></svg>
<div class="t" style="left:22.500px;top:426.500px">Cast Shadows</div>
<div class="hdr" style="top:451px"></div>
<svg style="left:9.500px;top:455.3px" width="7" height="6" viewBox="0 0 7 6"><path d="M0 0h7l-3.500 5.500z" fill="#f0f0f0"/></svg>
<div class="t" style="left:20.500px;top:451.5px">Area / Shape</div>
<div class="grp" style="top:466px;height:78.5px"></div>
<div class="t" style="left:11.500px;top:474px">Shape</div>
<div class="dd" style="left:47px;top:472.8px;width:74px;height:16.500px"><span class="t" style="left:5.500px;top:1px">Sphere</span></div>
<svg style="left:107.5px;top:478.8px" width="8" height="6" viewBox="0 0 8 6"><path d="M0 0h8l-4 5.500z" fill="#f0f0f0"/></svg>
<div class="trk" style="top:494.1px"><div class="hnd" style="left:0.2px"></div></div>
<div class="t tc" style="left:11px;width:202px;text-align:center;top:495.6px">Diameter</div>
<div class="val" style="top:494.1px"></div><div class="t" style="left:220px;top:495.6px">0.0</div>
<div class="cb" style="left:11.2px;top:526.3px;background:#3b3b3b;box-shadow:none"></div>
<svg style="left:11px;top:526px" width="10" height="9" viewBox="0 0 10 9"><path d="M0.800 4.800l2.700 2.900 5.700-6.900" fill="none" stroke="#f0f0f0" stroke-width="1.300"/></svg>
<div class="t" style="left:22.500px;top:524px">Normalize Brightness</div>
<div class="cb" style="left:177px;top:526.500px"></div>
<div class="t" style="left:188px;top:524px">Visible Shape</div>
<div class="hdr" style="top:548.4px"></div>
<svg style="left:9.500px;top:552.7px" width="7" height="6" viewBox="0 0 7 6"><path d="M0 0h7l-3.500 5.500z" fill="#f0f0f0"/></svg>
<div class="t" style="left:20.500px;top:548.9px">Spot</div>
<div class="grp" style="top:563.4px;height:72.9px"></div>
<div class="trk" style="top:569.1px"><div class="hnd" style="left:72.9px"></div></div>
<div class="t tc" style="left:11px;width:202px;text-align:center;top:570.6px">Spot Angle</div>
<div class="val" style="top:569.1px"></div><div class="t" style="left:220px;top:570.6px">45.0</div>
<div class="trk" style="top:591.2px"><div class="hnd" style="left:34.1px"></div></div>
<div class="t tc" style="left:11px;width:202px;text-align:center;top:592.7px">Spot Sharpness</div>
<div class="val" style="top:591.2px"></div><div class="t" style="left:220px;top:592.7px">4.0</div>
<div class="trk" style="top:613.6px"><div class="hnd" style="left:193.6px"></div></div>
<div class="t tc" style="left:11px;width:202px;text-align:center;top:615.1px">Spot Vignette</div>
<div class="val" style="top:613.6px"></div><div class="t" style="left:220px;top:615.1px">1.0</div>
<div class="hdr" style="top:641.6px"></div>
<svg style="left:9.500px;top:645.9px" width="7" height="6" viewBox="0 0 7 6"><path d="M0 0h7l-3.500 5.500z" fill="#f0f0f0"/></svg>
<div class="t" style="left:20.500px;top:642.1px">Gel</div>
<div class="grp" style="top:656.6px;height:65.7px"></div>
<div class="a" style="left:12px;top:663px;width:32px;height:32px;background:#585858;border:1px solid #505050;overflow:hidden"><div class="a" style="left:0;top:0;width:32px;height:32px;background-image:linear-gradient(45deg,#474747 25%,transparent 25%,transparent 75%,#474747 75%),linear-gradient(45deg,#474747 25%,transparent 25%,transparent 75%,#474747 75%);background-size:8px 8px;background-position:0 0,4px 4px"></div></div>
<div class="cb" style="left:47.2px;top:664.8px;background:#3b3b3b;box-shadow:none"></div>
<svg style="left:47px;top:664.5px" width="10" height="9" viewBox="0 0 10 9"><path d="M0.800 4.800l2.700 2.900 5.700-6.900" fill="none" stroke="#f0f0f0" stroke-width="1.300"/></svg>
<div class="t" style="left:57px;top:663px">Image: <span style="color:#a6a6a6">none</span></div>
<div class="trk" style="top:700.2px"><div class="hnd" style="left:61.0px"></div></div>
<div class="t tc" style="left:11px;width:202px;text-align:center;top:701.7px">Gel Tiling</div>
<div class="val" style="top:700.2px"></div><div class="t" style="left:220px;top:701.7px">1.0</div>
</div>
<div class="a" id="icons" style="left:0;top:0;width:310px;height:770px">
<svg style="left:0;top:0" width="310" height="42" viewBox="0 0 310 42">
<path d="M9.300 12.400L22 22.300L15.500 23.800L10 27.600Z" fill="#d9d9d9"/><path d="M15.600 24.500L19.300 33.200" stroke="#d9d9d9" stroke-width="2.200" fill="none"/>
<g stroke="#a4e35a" stroke-width="2" fill="none"><path d="M45.500 25.800V16M45.500 25.800L37.500 30.600M45.500 25.800L53.500 30.600"/></g><g fill="#a4e35a"><path d="M45.500 11.800L42.200 17.600h6.600z"/><path d="M33.900 33.200L36.300 27l3.600 5.600z"/><path d="M57.100 33.200L54.700 27l-3.600 5.600z"/></g>
<g stroke="#d9d9d9" stroke-width="1.500" fill="none"><circle cx="75.200" cy="23.100" r="10.600"/><ellipse cx="75.200" cy="23.100" rx="4.600" ry="10.600"/><path d="M65.500 19h19.400M65.500 27.500h19.400"/></g>
<g stroke="#d9d9d9" stroke-width="1.500" fill="none"><path d="M104.500 25.800V14M104.500 25.800L96.500 31M104.500 25.800L112.500 31"/></g><g fill="#d9d9d9"><circle cx="104.500" cy="13.600" r="1.700"/><circle cx="95.600" cy="31.800" r="2.100"/><circle cx="113.400" cy="31.800" r="2.100"/></g>
<g stroke="#d9d9d9" stroke-width="1.300" fill="none"><circle cx="134.300" cy="24" r="8.800"/><ellipse cx="134.300" cy="24" rx="3.600" ry="8.800"/><path d="M126 21.500h16.600M126.500 27.500h15.600M134.300 13.500v13M134.300 26.500l-9 5M134.300 26.500l9 5"/></g><g fill="#d9d9d9"><circle cx="134.300" cy="13.200" r="1.600"/><circle cx="124.800" cy="32" r="1.900"/><circle cx="143.800" cy="32" r="1.900"/></g>
<g transform="translate(159.500 18.500) rotate(-38)"><rect x="-4.200" y="-6" width="8.400" height="9" fill="#f0f0f0"/><path d="M-4.200 4h8.400l1.600 4.500h-11.600z" fill="#bdbdbd"/></g><path d="M162.500 24.500h14.500v11h-13z" fill="#555" opacity="0.850"/><path d="M166 24l7.500 7.500" stroke="#e8e8e8" stroke-width="1.700" fill="none"/><path d="M175.300 33.300l-5.400 -1.300 4.100 -4.100z" fill="#e8e8e8"/>
<path d="M183.200 18.200V13.200H188.200M191.500 13.200H196M199.200 13.200H204.200V18.200M204.200 21H204.200V25.500M204.200 28.200V33.200H199.200M196 33.200H191.500M188.200 33.200H183.200V28.200M183.200 25.500V21" fill="none" stroke="#e6e6e6" stroke-width="1.600"/>
<circle cx="223.200" cy="23.100" r="10.300" fill="none" stroke="#e6e6e6" stroke-width="1.600" stroke-dasharray="5.500 2.600"/>
<ellipse cx="254.300" cy="21.700" rx="9.600" ry="9.100" fill="none" stroke="#d9d9d9" stroke-width="1.600"/><path d="M248.500 29.500l-5.800 4.500 7.500 -1.700z" fill="none" stroke="#d9d9d9" stroke-width="1.200" stroke-linejoin="round"/>
<path d="M273.200 20.600L293.200 13.200L290.400 28.300L282.200 23.300L278.800 31.200Z" fill="none" stroke="#d9d9d9" stroke-width="1.600" stroke-linejoin="miter"/><path d="M277.500 29.500l-5.700 4.600 7.300 -1.900z" fill="none" stroke="#d9d9d9" stroke-width="1.200" stroke-linejoin="round"/>
</svg>
<div class="cb" style="left:306.800px;top:18.300px;background:#393939;box-shadow:none"></div>
<svg style="left:306.500px;top:18px" width="10" height="9" viewBox="0 0 10 9"><path d="M0.800 4.800l2.700 2.900 5.700 -6.900" fill="none" stroke="#f0f0f0" stroke-width="1.300"/></svg>
<svg style="left:260.800px;top:47.600px" width="12" height="11.500" viewBox="0 0 12 11"><path d="M5 2.200H0.700v8.100h8.300V6.800" fill="none" stroke="#a9a9a9" stroke-width="1.400"/><path d="M4.400 6.800L9.600 1.600" stroke="#e8e8e8" stroke-width="1.700" fill="none"/><path d="M6.400 0.300h5.200v5.200z" fill="#e8e8e8"/></svg>
<svg style="left:6px;top:69.5px" width="14" height="14.5" viewBox="0 0 14 14.5"><path d="M7 0.300L13.600 3.400 7 6.700 0.400 3.400z" fill="#e6e6e6"/><path d="M0.400 3.800L6.800 7v7.200L0.400 10.800z" fill="#d4d4d4"/><path d="M7.200 7l6.400 -3.200v7L7.200 14.200z" fill="#9a9a9a"/></svg>
<svg style="left:32px;top:69.5px" width="14" height="14.5" viewBox="0 0 14 14.5"><path d="M7 0.6c-2.9 0-4.6 2-4.6 4.4 0 1.7 1 2.9 1.9 4.1 0.6 0.8 0.9 1.5 1 2.4h3.4c0.1-0.9 0.4-1.6 1-2.4 0.9-1.2 1.9-2.4 1.9-4.1 0-2.4-1.7-4.4-4.6-4.4z" fill="#dcdcdc"/><path d="M5.4 11.7h3.2v1.1l-1 1h-1.2l-1-1z" fill="#a0a0a0"/></svg>
<svg style="left:58px;top:70.5px" width="14" height="13" viewBox="0 0 14 13"><rect x="0.500" y="1.700" width="13" height="2.700" fill="#f0f0f0"/><rect x="1.300" y="0.800" width="3.400" height="1.200" fill="#dedede"/><rect x="0.500" y="4.400" width="13" height="6.200" fill="#8c8c8c"/><path d="M0.500 6h13M0.500 8h13" stroke="#a8a8a8" stroke-width="0.700"/><circle cx="10.900" cy="3" r="0.950" fill="#1a1a1a"/><circle cx="7.600" cy="7.400" r="3.100" fill="#f4f4f4"/><circle cx="7.600" cy="7.400" r="1.800" fill="#444"/><circle cx="8.300" cy="6.700" r="0.700" fill="#fff"/><rect x="0.200" y="10.600" width="13.600" height="2.200" fill="#f4f4f4"/></svg>
<svg style="left:84px;top:70px" width="14" height="13.5" viewBox="0 0 14 13.5"><path d="M2 4.300c0 -1.700 1.300 -2.600 2.600 -2.400 0.700 -1.600 3.400 -2.300 4.900 -0.500 1.700 -0.200 3 1 3 2.500 0 1.400 -1 2.300 -2.400 2.300H4.200C2.900 6.200 2 5.400 2 4.300z" fill="#cfcfcf"/><path d="M0.300 8c0 -1.500 1.100 -2.300 2.400 -2.200 0.600 -1.400 2.800 -2 4.200 -0.600 1.500 -0.300 2.900 0.800 2.900 2.300 0 1.400 -1 2.200 -2.300 2.200H2.500C1.300 9.700 0.300 9.100 0.300 8z" fill="#bdbdbd"/><path d="M3.300 11.400c0 -1.400 1.100 -2.200 2.300 -2.100 0.700 -1.300 2.900 -1.800 4.200 -0.500 1.600 -0.200 3.200 0.700 3.200 2.400 0 1.400 -1 2.200 -2.500 2.200H5.600c-1.300 0 -2.300 -0.700 -2.300 -2z" fill="#d9d9d9"/></svg>
<svg style="left:110px;top:70px" width="14" height="13.5" viewBox="0 0 14 13.5"><defs><linearGradient id="brd" x1="0" x2="1"><stop offset="0" stop-color="#ededed"/><stop offset="0.550" stop-color="#dcdcdc"/><stop offset="1" stop-color="#8e8e8e"/></linearGradient></defs><path d="M0.500 6.400C0.300 3.500 2 1 5.200 0.700h5c2.500 0 3.700 1.800 3.500 3.800 -0.100 1.200 -0.700 1.800 -1.300 2.100v6.300H1.900V6.900z" fill="url(#brd)"/><path d="M1.900 6.900c1.500 -0.200 6 -0.200 7.600 0V12.900H1.900z" fill="#e3e3e3"/></svg>
<svg style="left:137px;top:69.5px" width="14" height="14.5" viewBox="0 0 14 14.5"><path d="M7.200 0.600c3.700 0 6.500 2.700 6.500 6.200 0 4 -3.300 7.100 -7 7.100 -1.300 0 -1.900 -0.700 -1.700 -1.600 0.200 -1 -0.100 -1.700 -1.200 -1.900C1.500 10 0.300 9 0.300 7c0 -3.700 3 -6.400 6.900 -6.400z" fill="#e3e3e3"/><g fill="#555"><circle cx="4" cy="5.100" r="1.200"/><circle cx="7.300" cy="3.200" r="1.200"/><circle cx="10.600" cy="5.100" r="1.200"/><circle cx="10.700" cy="9" r="1.200"/><circle cx="7.600" cy="11.300" r="1.300"/></g></svg>
<svg style="left:204.5px;top:70.5px" width="14" height="12.5" viewBox="0 0 14 12.5"><path d="M0.300 1.200C0.300 0.700 0.700 0.300 1.200 0.300h4.300l1.700 1.900h5.600c0.500 0 0.900 0.400 0.900 0.900v8.400c0 0.500 -0.400 0.900 -0.900 0.900H1.200c-0.500 0 -0.900 -0.400 -0.900 -0.900z" fill="#dcdcdc"/></svg>
<svg style="left:230.5px;top:70px" width="14" height="13.5" viewBox="0 0 14 13.5"><path d="M0.700 0.700h7.600v7.600H0.700z" fill="none" stroke="#cfcfcf" stroke-width="1.300"/><path d="M2.900 2.900h4.200v4.200H2.900z" fill="#8a8a8a"/><rect x="4.800" y="4.700" width="8.700" height="8.500" fill="#e8e8e8"/><path d="M9.150 5.600v6.700M5.700 8.950h6.900" stroke="#3c3c3c" stroke-width="1.300"/></svg>
<svg style="left:256.5px;top:70px" width="13.5" height="13.5" viewBox="0 0 13.5 13.5"><path d="M4.400 0.400h4.700l0.700 1.400h3.300v1.700H0.400V1.800h3.300z" fill="#d9d9d9"/><path d="M1.300 4.300h10.900v8.100c0 0.600 -0.400 1 -1 1H2.300c-0.600 0 -1 -0.400 -1 -1z" fill="#d9d9d9"/><path d="M4 5.200v7.200M6.750 5.200v7.200M9.500 5.200v7.200" stroke="#4a4a4a" stroke-width="1.200"/></svg>
<svg style="left:48px;top:680.5px" width="14" height="14" viewBox="0 0 14 14"><g fill="#d0d0d0"><circle cx="7" cy="7" r="4.700"/><rect x="5.600" y="0.200" width="2.800" height="3" transform="rotate(0 7 7)"/><rect x="5.600" y="0.200" width="2.800" height="3" transform="rotate(45 7 7)"/><rect x="5.600" y="0.200" width="2.800" height="3" transform="rotate(90 7 7)"/><rect x="5.600" y="0.200" width="2.800" height="3" transform="rotate(135 7 7)"/><rect x="5.600" y="0.200" width="2.800" height="3" transform="rotate(180 7 7)"/><rect x="5.600" y="0.200" width="2.800" height="3" transform="rotate(225 7 7)"/><rect x="5.600" y="0.200" width="2.800" height="3" transform="rotate(270 7 7)"/><rect x="5.600" y="0.200" width="2.800" height="3" transform="rotate(315 7 7)"/></g><circle cx="7" cy="7" r="2.200" fill="#444"/></svg>
<svg style="left:66px;top:680.5px" width="14" height="14" viewBox="0 0 14 14"><circle cx="5.200" cy="5.200" r="3.900" fill="none" stroke="#d0d0d0" stroke-width="1.700"/><path d="M8.200 8.200l4.800 4.800" stroke="#d0d0d0" stroke-width="2.200" stroke-linecap="round"/></svg>
<svg style="left:84px;top:680px" width="14" height="14.5" viewBox="0 0 14 14.5"><defs><radialGradient id="sph" cx="0.350" cy="0.300" r="0.800"><stop offset="0" stop-color="#d4d4d4"/><stop offset="1" stop-color="#8c8c8c"/></radialGradient></defs><circle cx="8.400" cy="9.200" r="4.700" fill="url(#sph)"/><path d="M3.200 0.400L0.700 2.900l1.600 1.800" fill="none" stroke="#d0d0d0" stroke-width="1.400"/></svg>
<svg style="left:102px;top:680.5px" width="14" height="14" viewBox="0 0 14 14"><path d="M10.200 0.900l2.900 2.900 -7.800 7.800 -2.900 -2.900z" fill="#cecece"/><path d="M1.700 9.700l2.600 2.600 -3.600 1z" fill="#cecece"/></svg>
<svg style="left:119.5px;top:680.5px" width="14" height="14" viewBox="0 0 14 14"><path d="M11.700 7.300a4.900 4.900 0 1 1 -1.700 -3.900" fill="none" stroke="#d0d0d0" stroke-width="1.900"/><path d="M12.600 0.700v5.200H7.400z" fill="#d0d0d0"/></svg>
<svg style="left:137.5px;top:681px" width="13" height="13" viewBox="0 0 13 13"><path d="M1.200 1.200l10.600 10.600M11.800 1.200L1.200 11.800" stroke="#d4d4d4" stroke-width="1.900" stroke-linecap="round"/></svg>
</div>
</div>
</body>
</html>
